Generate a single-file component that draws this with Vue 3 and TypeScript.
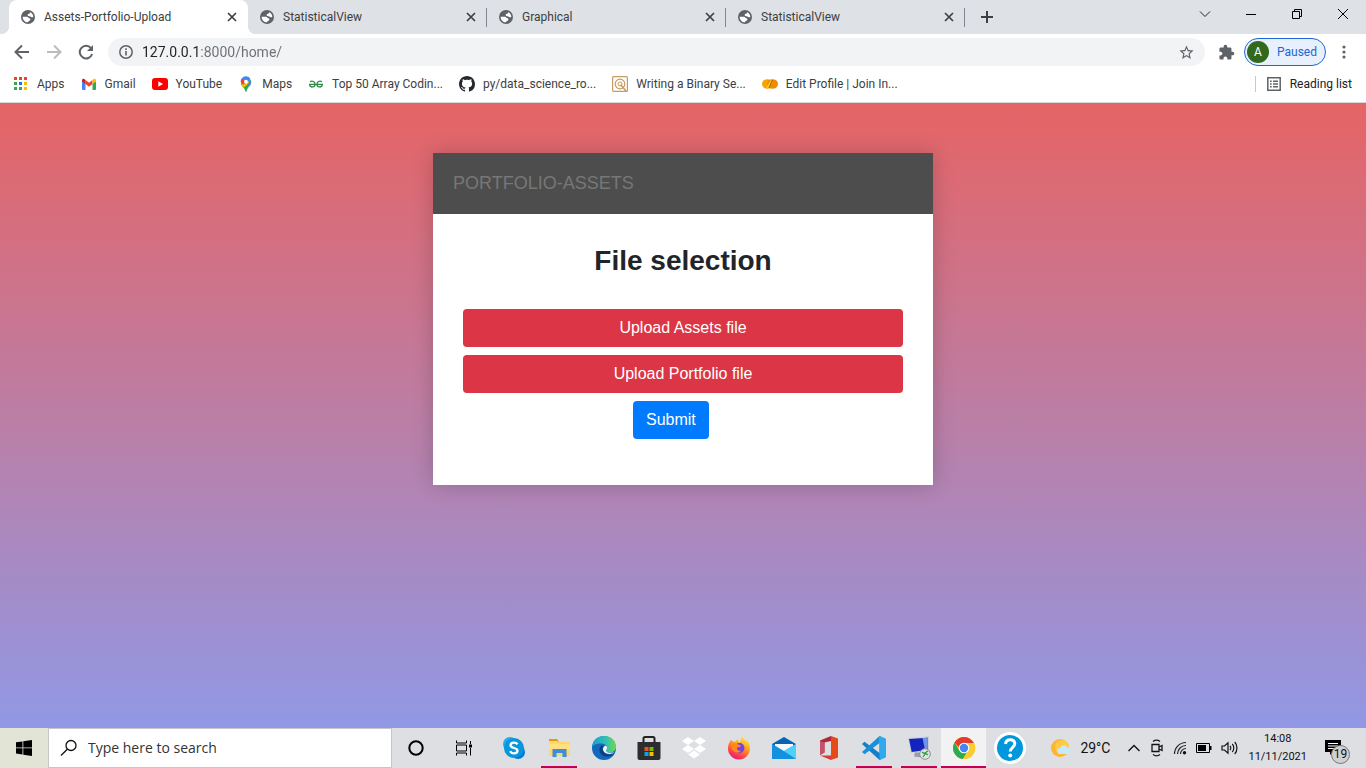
<script setup lang="ts">
import { ref } from 'vue'

interface Tab {
  title: string
  active: boolean
}

const tabs: Tab[] = [
  { title: 'Assets-Portfolio-Upload', active: true },
  { title: 'StatisticalView', active: false },
  { title: 'Graphical', active: false },
  { title: 'StatisticalView', active: false },
]

const address = ref('127.0.0.1:8000/home/')
const query = ref('')
const appsColors: string[] = ['#ea4335', '#ea4335', '#ea4335', '#34a853', '#1a73e8', '#fbbc04', '#34a853', '#34a853', '#fbbc04']
</script>

<template>
  <div class="desktop">
    <header class="browser">
      <div class="tabstrip">
        <div v-for="(tab, i) in tabs" :key="i" class="tab" :class="{ active: tab.active }">
          <svg class="favicon" viewBox="0 0 24 24" aria-hidden="true">
            <circle cx="12" cy="12" r="10.500" fill="#5f6368" />
            <path fill="#fff" d="M4 11.500h6.500c1.800 0 2 2.300 3.500 2.500 1.700.2 2 1.500 1.200 2.800-.9 1.300-2.700.9-3.200 3.200C7.500 20 4 16.500 4 11.500zM15.500 4.800C18.300 6 20 9 20 12c-1.200.8-2.700.6-3.700-.4-1-1.100-3.800-.6-4.600-2-.7-1.300.3-2.300 1.600-2.500 1.300-.2 2-.9 2.200-2.300z" />
          </svg>
          <span class="tab-title">{{ tab.title }}</span>
          <button class="tab-close" aria-label="Close tab">
            <svg width="10" height="10" viewBox="0 0 10 10"><path d="M1 1l8 8M9 1l-8 8" stroke="#3c4043" stroke-width="1.700" /></svg>
          </button>
        </div>
        <button class="new-tab" aria-label="New tab">
          <svg width="12" height="12" viewBox="0 0 12 12"><path d="M6 0v12M0 6h12" stroke="#3c4043" stroke-width="2" /></svg>
        </button>
        <div class="window-controls">
          <button aria-label="Search tabs"><svg width="12" height="12" viewBox="0 0 12 12"><path d="M1 3.500l5 5 5-5" fill="none" stroke="#222" /></svg></button>
          <button aria-label="Minimize"><svg width="12" height="12" viewBox="0 0 12 12"><path d="M1 6.500h10" stroke="#000" /></svg></button>
          <button aria-label="Restore"><svg width="12" height="12" viewBox="0 0 12 12" fill="none" stroke="#000"><path d="M1.500 3.500h7v7h-7zM3.500 3.500v-2h7v7h-2" /></svg></button>
          <button aria-label="Close"><svg width="12" height="12" viewBox="0 0 12 12"><path d="M1 1l10 10M11 1L1 11" stroke="#000" /></svg></button>
        </div>
      </div>

      <div class="toolbar">
        <button class="tool" aria-label="Back">
          <svg width="16" height="16" viewBox="0 0 16 16" fill="none" stroke="#5f6368" stroke-width="2"><path d="M15 8H2M8 1.500L1.500 8 8 14.500" /></svg>
        </button>
        <button class="tool" aria-label="Forward">
          <svg width="16" height="16" viewBox="0 0 16 16" fill="none" stroke="#babcbe" stroke-width="2"><path d="M1 8h13M8 1.500L14.500 8 8 14.500" /></svg>
        </button>
        <button class="tool" aria-label="Reload">
          <svg width="16" height="16" viewBox="0 0 16 16"><path d="M13 4.200A6.300 6.300 0 1 0 14.100 10" fill="none" stroke="#5f6368" stroke-width="2" /><path d="M15 1v6H9z" fill="#5f6368" /></svg>
        </button>
        <div class="omnibox">
          <svg width="14" height="14" viewBox="0 0 14 14" aria-hidden="true"><circle cx="7" cy="7" r="6.200" fill="none" stroke="#5f6368" stroke-width="1.500" /><path d="M7 6v4.500M7 3.300v1.600" stroke="#5f6368" stroke-width="1.600" /></svg>
          <input v-model="address" type="text" aria-label="Address" spellcheck="false" />
          <button class="star" aria-label="Bookmark this tab">
            <svg width="17" height="17" viewBox="0 0 24 24"><path fill="#5f6368" d="M22 9.240l-7.190-.620L12 2 9.190 8.630 2 9.240l5.460 4.730L5.820 21 12 17.270 18.180 21l-1.630-7.030L22 9.240zM12 15.400l-3.760 2.270 1-4.280-3.320-2.880 4.380-.380L12 6.100l1.710 4.040 4.380.380-3.320 2.880 1 4.280L12 15.400z" /></svg>
          </button>
        </div>
        <button class="extensions" aria-label="Extensions">
          <svg width="17" height="17" viewBox="0 0 24 24"><path fill="#5f6368" d="M20.500 11H19V7c0-1.100-.9-2-2-2h-4V3.500C13 2.120 11.880 1 10.500 1S8 2.120 8 3.500V5H4c-1.100 0-1.990.9-1.990 2v3.800H3.500c1.490 0 2.700 1.210 2.700 2.700s-1.210 2.700-2.700 2.700H2V20c0 1.100.9 2 2 2h3.800v-1.500c0-1.490 1.210-2.700 2.700-2.700 1.490 0 2.700 1.210 2.700 2.700V22H17c1.100 0 2-.9 2-2v-4h1.500c1.380 0 2.500-1.120 2.500-2.500S21.880 11 20.500 11z" /></svg>
        </button>
        <button class="profile"><span class="avatar">A</span><span>Paused</span></button>
        <button class="menu" aria-label="Menu">
          <svg width="4" height="16" viewBox="0 0 4 16" fill="#5f6368"><circle cx="2" cy="3" r="1.600" /><circle cx="2" cy="8" r="1.600" /><circle cx="2" cy="13" r="1.600" /></svg>
        </button>
      </div>

      <nav class="bookmarks" aria-label="Bookmarks">
        <a href="#">
          <svg viewBox="0 0 16 16"><rect v-for="(c, i) in appsColors" :key="i" :x="1 + (i % 3) * 5" :y="1 + Math.floor(i / 3) * 5" width="3" height="3" :fill="c" /></svg>
          Apps
        </a>
        <a href="#">
          <svg viewBox="0 0 16 16"><path fill="#4285f4" d="M1 5l3.500 2.500V14H2a1 1 0 0 1-1-1z" /><path fill="#34a853" d="M15 5l-3.500 2.500V14H14a1 1 0 0 0 1-1z" /><path fill="#ea4335" d="M4.500 4L8 6.700 11.500 4v4L8 10.700 4.500 8z" /><path fill="#c5221f" d="M1 4.500C1 2.800 2.700 2.300 4 3.500L4.500 4v4L1 5.500z" /><path fill="#fbbc04" d="M15 4.500c0-1.700-1.700-2.200-3-1l-.5.5v4L15 5.500z" /></svg>
          Gmail
        </a>
        <a href="#">
          <svg viewBox="0 0 16 16"><rect y="2" width="16" height="12" rx="3" fill="#f00" /><path d="M6.300 5.300v5.400L11 8z" fill="#fff" /></svg>
          YouTube
        </a>
        <a href="#">
          <svg viewBox="0 0 16 16"><path fill="#34a853" d="M2.800 7.500l9.900-3.700c.9 2 .6 4-.8 5.800C10 12 9 13 8.600 15.200c-.2.900-1 .9-1.200 0C7 12.500 3.500 10.500 2.800 7.500z" /><path fill="#fbbc04" d="M3.500 9.200L9.800 2l1.400 5.500-5.800 4.300z" /><path fill="#ea4335" d="M3.800 2.200L8 5.500 5.500 8.600 2.700 6.200c0-1.600.3-2.900 1.100-4z" /><path fill="#4285f4" d="M3.800 2.200A5.300 5.300 0 0 1 12.500 3L9.800 6 8 4 5.800 4.500zM9 9l3.800-4.500c.5 2 .2 3.500-.8 5z" /><circle cx="8" cy="5.700" r="1.900" fill="#fff" /></svg>
          Maps
        </a>
        <a href="#">
          <svg viewBox="0 0 16 16" fill="none" stroke="#2f8d46" stroke-width="1.300"><path d="M1 8.300h14M2 5.600c2.600-1.400 5 .2 5 2.600 0 3.300-4.600 4-5.500.3M14 5.600c-2.600-1.400-5 .2-5 2.600 0 3.300 4.600 4 5.500.3" /></svg>
          Top 50 Array Codin...
        </a>
        <a href="#">
          <svg viewBox="0 0 16 16"><path fill="#24292f" d="M8 0C3.580 0 0 3.580 0 8c0 3.540 2.290 6.530 5.470 7.590.4.070.55-.17.55-.38 0-.19-.01-.82-.01-1.490-2.010.37-2.530-.49-2.690-.94-.09-.23-.48-.94-.82-1.130-.28-.15-.68-.52-.01-.53.630-.010 1.080.580 1.230.820.720 1.210 1.870.870 2.330.660.070-.520.280-.870.510-1.070-1.780-.2-3.640-.89-3.640-3.950 0-.87.31-1.590.82-2.150-.08-.2-.36-1.020.08-2.120 0 0 .67-.21 2.200.82.64-.18 1.320-.27 2-.27s1.360.09 2 .27c1.530-1.040 2.200-.82 2.200-.82.44 1.100.16 1.920.08 2.120.51.560.82 1.270.82 2.150 0 3.070-1.870 3.750-3.650 3.950.290.250.540.730.540 1.480 0 1.070-.010 1.930-.010 2.200 0 .210.150.460.550.380A8.010 8.010 0 0 0 16 8c0-4.420-3.580-8-8-8z" /></svg>
          py/data_science_ro...
        </a>
        <a href="#">
          <svg viewBox="0 0 16 16" fill="none" stroke="#c69a63"><rect x=".6" y=".6" width="14.800" height="14.800" rx="1" stroke-width="1.200" /><circle cx="8" cy="8" r="4.800" stroke-width="1.200" /><circle cx="8" cy="8" r="2" /><path d="M8.500 8.500L14 15" stroke-width="1.500" /></svg>
          Writing a Binary Se...
        </a>
        <a href="#">
          <svg viewBox="0 0 16 16"><ellipse cx="5.500" cy="8" rx="5.500" ry="4.800" fill="#f7a400" /><ellipse cx="10.500" cy="8" rx="5.500" ry="4.800" fill="#ee8c00" /><path d="M4 11.500L9 4l2 1-3.500 7z" fill="#ffc629" /><path d="M7 12l3.500-8" stroke="#a65300" /></svg>
          Edit Profile | Join In...
        </a>
        <button class="reading">
          <svg width="14" height="14" viewBox="0 0 14 14" fill="none" stroke="#5f6368" stroke-width="1.500"><path d="M.8.800h12.400v12.400H.8zM3 4.300h1.700M3 7h1.700M3 9.700h1.700M6 4.300h5M6 7h5M6 9.700h5" /></svg>
          Reading list
        </button>
      </nav>
    </header>

    <main class="page">
      <section class="card">
        <div class="card-header">PORTFOLIO-ASSETS</div>
        <form class="card-body" @submit.prevent>
          <h2>File selection</h2>
          <button type="button" class="btn danger">Upload Assets file</button>
          <button type="button" class="btn danger">Upload Portfolio file</button>
          <button type="submit" class="btn primary">Submit</button>
        </form>
      </section>
    </main>

    <footer class="taskbar">
      <button class="start" aria-label="Start">
        <svg width="16" height="16" viewBox="0 0 16 16"><path d="M0 2.300l6.500-.9v6.100H0zM7.300 1.300L16 0v7.500H7.300zM0 8.300h6.500v6.200L0 13.600zM7.300 8.300H16V16l-8.700-1.300z" /></svg>
      </button>
      <label class="search">
        <svg width="18" height="18" viewBox="0 0 18 18" fill="none" stroke="#111" stroke-width="1.300"><circle cx="11" cy="6.500" r="5" /><path d="M7.300 10.200L1 16.500" /></svg>
        <input v-model="query" type="text" placeholder="Type here to search" aria-label="Search" />
      </label>
      <button class="sys" aria-label="Cortana"><svg width="16" height="16" viewBox="0 0 16 16"><circle cx="8" cy="8" r="6.700" fill="none" stroke="#000" stroke-width="2" /></svg></button>
      <button class="sys" aria-label="Task view"><svg width="18" height="16" viewBox="0 0 18 16" fill="none" stroke="#000"><path d="M1.500.5v2.500h10V.5M1.500 5h10v6h-10zM1.500 15.500V13h10v2.500M15.500 1v3M15.500 8v7.500" /><path d="M14 4.500h3v3h-3z" fill="#000" stroke="none" /></svg></button>
      <div class="apps">
        <button aria-label="Skype"><svg viewBox="0 0 24 24"><circle cx="8" cy="8" r="7" fill="#28a8ea" /><circle cx="16" cy="16" r="7" fill="#0078d4" /><circle cx="12" cy="12" r="10" fill="#0797dc" /><path d="M15.500 8.300C14.700 7 13.500 6.600 12 6.600c-2 0-3.500 1-3.500 2.700 0 3.500 7 1.900 7 5.200 0 1.800-1.500 2.900-3.500 2.900-1.800 0-3.200-.7-3.800-2.300" fill="none" stroke="#fff" stroke-width="2.300" /></svg></button>
        <button class="open" aria-label="File Explorer"><svg viewBox="0 0 24 24"><path d="M2 3h8l2 3H2z" fill="#e39b0c" /><path d="M2 5h8l1.500 1H23v14H2z" fill="#ffd767" /><path d="M2 8h21v6H2z" fill="#ffdf80" /><path d="M5.500 13h14v8h-4v-4h-6v4h-4z" fill="#3b8eda" /></svg></button>
        <button aria-label="Edge"><svg viewBox="0 0 24 24"><defs><linearGradient id="edge-a" x1="0" y1="0" x2="1" y2="0"><stop stop-color="#149ed8" /><stop offset=".6" stop-color="#35c1b0" /><stop offset="1" stop-color="#6ddc4a" /></linearGradient></defs><circle cx="12" cy="12" r="12" fill="#1268bb" /><path d="M0 11C.5 4.500 5.500 0 12 0c7 0 12 5 12 10.500 0 4-3 6-6 6-2.500 0-4-1-4-2 0-.8 1-1.200 1-3C15 9 12 7.500 8.500 7.500 4.500 7.500 1 9 0 11z" fill="url(#edge-a)" /><path d="M9 9.500c-3.500 4-1 10 5 11 4 .6 7-1.500 8-3-6 2.800-11.500-.5-11.500-4.500 0-1.500.7-2.500 1.500-3z" fill="#0c3e82" /><path d="M13.500 9.500c-2.400 1-3.200 3.500-2 5.500 2 3.500 8 3.800 11 1.200-3 1-7 .8-8.300-.9-.7-1 .8-1.500.8-3.500 0-1-.5-1.800-1.500-2.300z" fill="#f0f5f7" /></svg></button>
        <button aria-label="Microsoft Store"><svg viewBox="0 0 24 24"><path d="M6.500 7V2.500a1.500 1.500 0 0 1 1.500-1.500h8a1.500 1.500 0 0 1 1.500 1.500V7" fill="none" stroke="#222" stroke-width="2" /><path d="M.5 6h23v16a2 2 0 0 1-2 2h-19a2 2 0 0 1-2-2z" fill="#2d2d2d" /><path d="M7.500 11h4v4h-4z" fill="#f25022" /><path d="M12.500 11h4v4h-4z" fill="#7fba00" /><path d="M7.500 16h4v4h-4z" fill="#00a4ef" /><path d="M12.500 16h4v4h-4z" fill="#ffb900" /></svg></button>
        <button aria-label="Dropbox"><svg viewBox="0 0 24 24" fill="#fff"><path d="M6 1l6 4-6 4-6-4zM18 1l6 4-6 4-6-4zM6 9l6 4-6 4-6-4zM18 9l6 4-6 4-6-4zM12 14.500l6 4-6 4-6-4z" /></svg></button>
        <button aria-label="Firefox"><svg viewBox="0 0 24 24"><defs><linearGradient id="ff-a" x1=".8" y1="0" x2=".3" y2="1"><stop stop-color="#fff044" /><stop offset=".4" stop-color="#ffa51e" /><stop offset=".75" stop-color="#ff4646" /><stop offset="1" stop-color="#e31587" /></linearGradient></defs><path d="M3 5.500c.3-.8.900-1.500 1.500-2 .1 1 .5 1.600 1 2 1.200-.1 2 .1 2.500.4 1-1.400 2-2 3.200-2.400-.3 1.300.1 2 .7 2.500 1-.3 1.700-.8 2-1.500-.4-1.800.3-3.500 1.600-4.300.2 2.500 2.500 3.400 4 5.300.3-.5.300-1 .2-1.500C22 6 23 9 23 12.500A11 11 0 0 1 12 23.500 11 11 0 0 1 1 12.500c0-2.500.6-5 2-7z" fill="url(#ff-a)" /><circle cx="12.500" cy="12" r="5" fill="#7542e5" /><path d="M4.500 9.500c2-2.500 5-2.500 7.500-.5 1.200 0 2 .5 2 1-1 1.200-3.200.8-4 2-.5 1.800 1.500 3.500 4 2.500-1.800 3-6.500 2.500-8.500-.5-1-1.500-1.300-3-1-4.500z" fill="#ff8a1c" /></svg></button>
        <button aria-label="Mail"><svg viewBox="0 0 24 24"><path d="M0 8L12 1l12 7v6H0z" fill="#0364b8" /><path d="M3 8h18v8H3z" fill="#f6f8fa" /><path d="M0 8l12 7 12-7v15H0z" fill="#28a8ea" /><path d="M0 8l24 15H0z" fill="#1490df" /><path d="M24 8v15L12 15z" fill="#50d0f8" /></svg></button>
        <button aria-label="Office"><svg viewBox="0 0 24 24"><path d="M14 0l7 2.500v19L14 24z" fill="#e64a19" /><path d="M14 0L3 4.500V19l4.500-2.500V6.500L14 5z" fill="#b32638" /><path d="M3 19.500h11V24z" fill="#d63b34" /><path d="M3 5l4.500 1.500v10L3 19z" fill="#c4526b" /></svg></button>
        <button class="open" aria-label="Visual Studio Code"><svg viewBox="0 0 24 24"><path d="M17.500 0L24 3v18l-6.500 3L0 8l2.500-2.300L17.500 17z" fill="#1180c9" /><path d="M17.500 0L0 16l2.500 2.300L17.500 7z" fill="#1b8fdc" /><path d="M17.500 0L24 3v18l-6.500 3z" fill="#31a9ee" /></svg></button>
        <button class="open" aria-label="Remote Desktop"><svg viewBox="0 0 24 24"><path d="M8 16l6 1 1 4.500-8-1z" fill="#9a9da3" /><path d="M1 2L22 .5v14L4 17z" fill="#c9ced8" /><path d="M2 3l18.800-1.300v12L4.700 16z" fill="#1423bd" /><path d="M15.500 2l5.300-.3v12l-2.800.4z" fill="#6f93e8" /><circle cx="18" cy="18" r="5.300" fill="#e2e5e4" stroke="#8d9190" /><path d="M15 16l3 2-2 3M21 15l-3 2 3 2" fill="none" stroke="#2b9b3c" stroke-width="1.300" /></svg></button>
        <button class="open current" aria-label="Google Chrome"><svg viewBox="0 0 24 24"><circle cx="12" cy="12" r="11" fill="#fbc116" /><path d="M2.500 6.500A11 11 0 0 1 21.500 6.500L22 7H12v10z" fill="#e33b2e" /><path d="M2.500 6.500A11 11 0 0 0 11 23l5-8.500-8.700 0z" fill="#2da94f" /><path d="M12 7h10a11 11 0 0 1-11 16l5-8.500z" fill="#fccb2f" /><circle cx="12" cy="12" r="5.300" fill="#fff" /><circle cx="12" cy="12" r="4.200" fill="#4285f4" /></svg></button>
        <button class="help" aria-label="Help"><svg class="big" viewBox="0 0 32 32"><circle cx="16" cy="16" r="16" fill="#fff" /><circle cx="16" cy="16" r="13" fill="#0097dc" /><path d="M11.500 12c.3-3 2.200-4.300 4.700-4.300 2.600 0 4.600 1.500 4.600 4 0 3.500-4.500 3.700-4.500 7.800" fill="none" stroke="#fff" stroke-width="3" /><circle cx="16.200" cy="23.500" r="2" fill="#fff" /></svg></button>
      </div>
      <div class="tray">
        <button class="weather">
          <svg width="20" height="20" viewBox="0 0 20 20"><circle cx="9" cy="10" r="9" fill="#fdb62d" /><circle cx="11" cy="9" r="7" fill="#ffca45" /><path d="M9.500 16a3 3 0 0 1-.3-6 4 4 0 0 1 7.300-.5 3.300 3.300 0 0 1 .5 6.500z" fill="#c7e7fa" /></svg>
          29°C
        </button>
        <button aria-label="Show hidden icons"><svg width="14" height="14" viewBox="0 0 14 14"><path d="M1.500 10L7 4.500 12.500 10" fill="none" stroke="#111" stroke-width="1.400" /></svg></button>
        <button aria-label="Meet now"><svg width="14" height="18" viewBox="0 0 14 18" fill="none" stroke="#111" stroke-width="1.300"><path d="M2 5.500h7v7H2zM9 8l3-1.500v5L9 10M3 2.500c2-1.500 5-1.500 7 0M3 15.500c2 1.500 5 1.500 7 0" /></svg></button>
        <button aria-label="Network"><svg width="14" height="14" viewBox="0 0 14 14" fill="none" stroke="#222" stroke-width="1.200"><path d="M1.500 13C1.500 6.600 6.600 1.500 13 1.500M4.500 13C4.500 8.300 8.300 4.500 13 4.500M7.500 13c0-3 2.500-5.500 5.500-5.500" /><circle cx="11.500" cy="11.700" r="1.700" fill="#111" stroke="none" /></svg></button>
        <button aria-label="Battery"><svg width="16" height="10" viewBox="0 0 16 10"><path d="M.5.500h13v9H.5z" fill="none" stroke="#000" /><path d="M2 2h8v6H2zM14 3h1.500v4H14z" /></svg></button>
        <button aria-label="Volume"><svg width="18" height="14" viewBox="0 0 18 14" fill="none" stroke="#111" stroke-width="1.200"><path d="M1 5h2.500L7 1.800v10.400L3.500 9H1zM9 5c1 1 1 3 0 4M11.300 3c2 2 2 6 0 8M13.700 1c3 3 3 9 0 12" /></svg></button>
        <button class="clock"><span>14:08</span><span>11/11/2021</span></button>
        <button class="notify" aria-label="19 new notifications">
          <svg width="16" height="16" viewBox="0 0 16 16"><path d="M0 0h16v12H8l-3 3v-3H0z" /><path d="M3 3.500h10M3 6h10M3 8.500h7" stroke="#fff" stroke-width="1.200" /></svg>
          <span class="badge">19</span>
        </button>
      </div>
    </footer>
  </div>
</template>

<style>
body {
  margin: 0;
}
</style>

<style scoped>
* {
  box-sizing: border-box;
}
.desktop {
  display: flex;
  flex-direction: column;
  min-height: 100vh;
  font: 12px/16px Roboto, "Noto Sans", sans-serif;
  color: #3c4043;
}
button {
  display: flex;
  align-items: center;
  justify-content: center;
  padding: 0;
  border: 0;
  background: none;
  font: inherit;
  color: inherit;
}
svg {
  flex: none;
  display: block;
}
input {
  border: 0;
  padding: 0;
  outline: 0;
  min-width: 0;
  background: none;
}
.browser {
  background: #fff;
  border-bottom: 1px solid #d5d8dc;
}
.tabstrip {
  display: flex;
  height: 34px;
  padding-left: 9px;
  background: #dee1e6;
}
.tab {
  position: relative;
  display: flex;
  align-items: center;
  width: 239px;
  padding: 0 10px 0 11px;
}
.tab.active {
  background: #fff;
  border-radius: 8px 8px 0 0;
}
.tab.active::before,
.tab.active::after {
  content: "";
  position: absolute;
  bottom: 0;
  width: 8px;
  height: 8px;
}
.tab.active::before {
  right: 100%;
  background: radial-gradient(circle at 0 0, transparent 8px, #fff 8px);
}
.tab.active::after {
  left: 100%;
  background: radial-gradient(circle at 100% 0, transparent 8px, #fff 8px);
}
.tab:not(.active)::after {
  content: "";
  position: absolute;
  right: 0;
  top: 8px;
  width: 1px;
  height: 19px;
  background: #80868b;
}
.favicon {
  width: 16px;
  height: 16px;
}
.tab-title {
  flex: 1;
  margin-left: 8px;
  white-space: nowrap;
}
.tab-close {
  width: 12px;
  height: 16px;
}
.new-tab {
  width: 44px;
}
.window-controls {
  display: flex;
  height: 28px;
  margin-left: auto;
}
.window-controls button {
  width: 46px;
}
.toolbar {
  display: flex;
  align-items: center;
  height: 36px;
  padding: 0 19px 0 6px;
}
.tool {
  width: 32px;
  height: 28px;
}
.omnibox {
  display: flex;
  flex: 1;
  align-items: center;
  height: 28px;
  margin-left: 6px;
  padding: 0 10px 0 11px;
  border-radius: 14px;
  background: #f1f3f4;
}
.omnibox input {
  flex: 1;
  height: 24px;
  margin-left: 9px;
  font: 14px/20px Roboto, "Noto Sans", sans-serif;
  color: transparent;
  background: linear-gradient(to right, #202124 58px, #6b6f74 58px);
  background-clip: text;
}
.extensions {
  margin: 0 9px 0 13px;
}
.profile {
  height: 28px;
  gap: 8px;
  padding: 0 8px 0 2px;
  border: 1px solid #1967d2;
  border-radius: 14px;
  background: #e8f0fe;
  color: #1967d2;
}
.avatar {
  width: 22px;
  height: 22px;
  border-radius: 50%;
  background: #33691e;
  color: #fff;
  line-height: 22px;
}
.menu {
  margin-left: 15px;
  width: 6px;
}
.bookmarks {
  display: flex;
  align-items: center;
  height: 32px;
  gap: 16px;
  padding: 0 14px 4px 13px;
}
.bookmarks a {
  display: flex;
  gap: 8px;
  color: inherit;
  text-decoration: none;
  white-space: nowrap;
}
.bookmarks a svg {
  width: 16px;
  height: 16px;
}
.reading {
  gap: 9px;
  margin-left: auto;
  padding-left: 11px;
  border-left: 1px solid #c6c9cd;
  color: #202124;
}
.page {
  flex: 1;
  padding: 50px 16px;
  background: linear-gradient(#e66465, #9198e5);
  font: 16px/24px "Liberation Sans", Arial, sans-serif;
}
.card {
  max-width: 500px;
  margin: 0 auto;
  background: #fff;
  box-shadow: 0 0 20px rgba(0, 0, 0, 0.2);
}
.card-header {
  padding: 20px;
  background: #4d4d4d;
  color: #777;
  font-size: 18px;
  line-height: 21px;
}
.card-body {
  display: flex;
  flex-direction: column;
  gap: 8px;
  padding: 30px 30px 46px;
}
h2 {
  margin: 0 0 23px;
  color: #212529;
  font-size: 28px;
  line-height: 34px;
  text-align: center;
}
.btn {
  height: 38px;
  padding: 0 13px;
  border-radius: 4px;
  color: #fff;
}
.danger {
  background: #dc3545;
}
.primary {
  align-self: flex-start;
  margin-left: 170px;
  background: #007bff;
}
.taskbar {
  display: flex;
  height: 40px;
  background: #dddfe2;
  color: #111;
}
.start {
  width: 48px;
  background: #e2e4d5;
}
.search {
  display: flex;
  flex: 0 1 344px;
  align-items: center;
  gap: 10px;
  padding: 0 11px;
  border: 1px solid #c5c6c9;
  background: #fff;
}
.search input {
  flex: 1;
  font: 14px/20px "Open Sans", "Noto Sans", sans-serif;
}
.search input::placeholder {
  color: #333;
  opacity: 1;
}
.sys {
  width: 48px;
}
.apps {
  display: flex;
  margin-left: 3px;
}
.apps button {
  position: relative;
  width: 45px;
}
.apps .help {
  width: 48px;
}
.apps svg {
  width: 24px;
  height: 24px;
}
.apps .big {
  width: 32px;
  height: 32px;
}
.apps .open::after {
  content: "";
  position: absolute;
  left: 5px;
  right: 4px;
  bottom: 0;
  height: 2px;
  background: #c30052;
}
.apps .current {
  background: #f2f2f3;
}
.apps .current::after {
  left: 0;
  right: 0;
}
.tray {
  display: flex;
  align-items: center;
  gap: 9px;
  margin-left: auto;
  padding-right: 25px;
}
.weather {
  gap: 9px;
  margin-right: 8px;
  font-size: 14px;
}
.clock {
  flex-direction: column;
  font-size: 11px;
  line-height: 18px;
}
.notify {
  position: relative;
  margin-left: 9px;
}
.badge {
  position: absolute;
  left: 6px;
  top: 5px;
  width: 19px;
  height: 19px;
  border: 1px solid #777;
  border-radius: 50%;
  background: #cfd0d2;
  font-size: 12px;
  line-height: 17px;
}
</style>
